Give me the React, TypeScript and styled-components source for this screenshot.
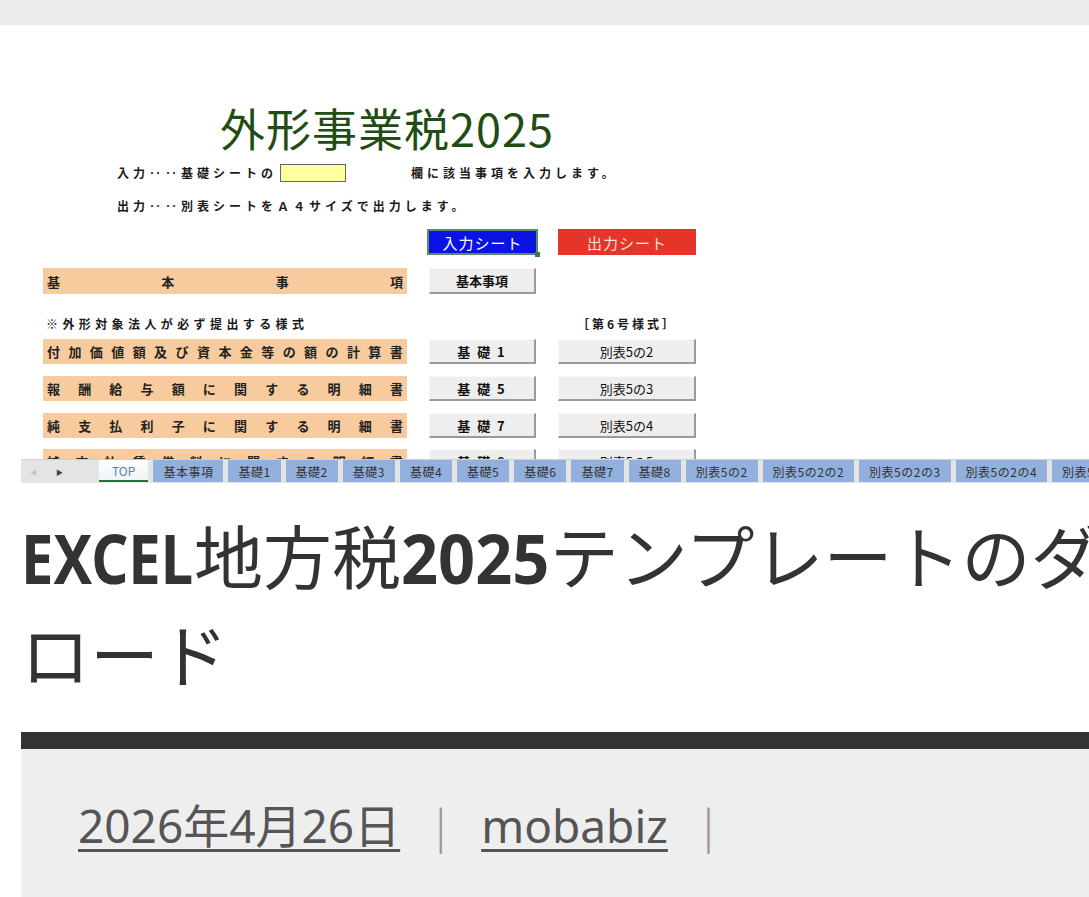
import React from "react";
import styled, { createGlobalStyle } from "styled-components";

const GlobalStyle = createGlobalStyle`
  html, body {
    margin: 0;
    padding: 0;
    overflow: hidden;
    background: #ebebed;
  }
  body {
    font-family: "Noto Sans", "Noto Sans CJK JP", sans-serif;
  }
`;

const JP = `"Noto Sans CJK JP", "Noto Sans", sans-serif`;

const Page = styled.div`
  padding-top: 25px;
  width: 1300px;
`;

const Article = styled.article`
  background: #ffffff;
  padding: 30px 0 0 21px;
`;

const Inner = styled.div`
  width: 1236px;
`;

/* ---------- excel screenshot ---------- */

const Sheet = styled.div`
  display: flex;
  flex-direction: column;
  font-family: ${JP};
  color: #1a1a1a;
`;

const SheetBody = styled.div`
  height: 404px;
  overflow: hidden;
  padding: 45px 0 0 22px;
  box-sizing: border-box;
`;

const SheetTitle = styled.div`
  margin-left: 177px;
  font-size: 45px;
  line-height: 55px;
  color: #1f4d13;
  letter-spacing: 1px;
`;

const Note = styled.div<{ $mt: number }>`
  margin: ${(p) => p.$mt}px 0 0 74px;
  font-size: 12px;
  line-height: 20px;
  font-weight: 700;
  letter-spacing: 4px;
  white-space: nowrap;
  display: flex;
  align-items: center;
`;

const InputCell = styled.span`
  display: inline-block;
  width: 64px;
  height: 16px;
  background: #ffff9e;
  border: 1px solid #666;
  margin: 0 65px 0 3px;
`;

const Row = styled.div<{ $mt: number; $h?: number }>`
  display: grid;
  grid-template-columns: 364px 107px 138px;
  column-gap: 22px;
  margin-top: ${(p) => p.$mt}px;
  height: ${(p) => p.$h ?? 25}px;
  align-items: stretch;
`;

const Label = styled.div`
  background: #f7cb9d;
  display: flex;
  justify-content: space-between;
  align-items: center;
  padding: 0 4px;
  font-size: 13px;
  font-weight: 700;
  color: #222;
`;

const Caption = styled.div<{ $center?: boolean }>`
  font-size: 12px;
  font-weight: 700;
  letter-spacing: ${(p) => (p.$center ? "3px" : "4.4px")};
  display: flex;
  align-items: center;
  padding-left: ${(p) => (p.$center ? "0" : "3px")};
  justify-content: ${(p) => (p.$center ? "center" : "flex-start")};
  white-space: nowrap;
`;

const GrayButton = styled.div<{ $spaced?: boolean; $bold?: boolean }>`
  background: #eeeeee;
  border-right: 2px solid #9a9a9a;
  border-bottom: 2px solid #9a9a9a;
  border-top: 1px solid #f8f8f8;
  border-left: 1px solid #f8f8f8;
  display: flex;
  align-items: center;
  justify-content: center;
  font-size: 13px;
  font-weight: ${(p) => (p.$bold ? 700 : 400)};
  letter-spacing: ${(p) => (p.$spaced ? "2px" : "0")};
  color: #111;
`;

const ColorButton = styled.div<{ $bg: string; $fg: string; $selected?: boolean }>`
  position: relative;
  background: ${(p) => p.$bg};
  color: ${(p) => p.$fg};
  display: flex;
  align-items: center;
  justify-content: center;
  font-size: 15px;
  letter-spacing: 1px;
  box-sizing: border-box;
  border: ${(p) => (p.$selected ? "2px solid #5c8c5c" : "none")};
  margin: ${(p) => (p.$selected ? "0 -2px" : "0")};
`;

const Handle = styled.span`
  position: absolute;
  right: -4px;
  bottom: -4px;
  width: 5px;
  height: 5px;
  background: #2f7d3a;
`;

const TabBar = styled.div`
  height: 24px;
  background: #e4e4e4;
  border-top: 1px solid #cfcfcf;
  box-sizing: border-box;
  display: flex;
  align-items: stretch;
  gap: 5px;
  white-space: nowrap;
  overflow: hidden;
`;

const TabNav = styled.div`
  width: 73px;
  display: flex;
  align-items: center;
  gap: 19px;
  padding-left: 9px;
  box-sizing: border-box;
  font-size: 7px;
`;

const Arrow = styled.span<{ $dim?: boolean }>`
  color: ${(p) => (p.$dim ? "#c4c4c4" : "#444")};
`;

const Tab = styled.div<{ $active?: boolean }>`
  flex: none;
  padding: 0 ${(p) => (p.$active ? "13px" : "10px")};
  display: flex;
  align-items: center;
  font-size: 12px;
  letter-spacing: ${(p) => (p.$active ? "0" : "0.5px")};
  color: ${(p) => (p.$active ? "#5d7fa8" : "#333")};
  background: ${(p) =>
    p.$active ? "linear-gradient(#ffffff, #eef2f6)" : "#92b0dd"};
  border-bottom: ${(p) => (p.$active ? "2px solid #2e6e3e" : "none")};
  margin-bottom: 1px;
`;

/* ---------- post header ---------- */

const PostTitle = styled.h1`
  margin: 24px 0 0;
  font-family: ${JP};
  font-weight: 400;
  font-size: 69px;
  line-height: 95px;
  color: #333;
`;

/* no condensed face is installed, so the bold latin is narrowed by hand */
const Latin = styled.span<{ $scale: number; $em: number }>`
  display: inline-block;
  font-family: "Noto Sans", "Liberation Sans", sans-serif;
  font-weight: 700;
  transform: scaleX(${(p) => p.$scale});
  transform-origin: 0 50%;
  margin-right: ${(p) => -(1 - p.$scale) * p.$em}em;
`;

const Rule = styled.div`
  margin-top: 32px;
  height: 17px;
  background: #333333;
`;

const Meta = styled.div`
  background: #eeeeee;
  padding: 43px 0 0 57px;
  height: 200px;
  font-family: "Noto Sans", "Noto Sans CJK JP", sans-serif;
  font-size: 46px;
  line-height: 66px;
  color: #555;
  display: flex;
  align-items: flex-start;
`;

const MetaLink = styled.a`
  color: #555;
  text-decoration: underline;
  text-decoration-thickness: 3px;
  text-underline-offset: 6px;
`;

const Sep = styled.span`
  color: #999;
  font-weight: 300;
  margin: 0 28px;
`;

const spread = (text: string) =>
  Array.from(text).map((c, i) => <span key={i}>{c}</span>);

const rows = [
  { label: "付加価値額及び資本金等の額の計算書", base: "基 礎 1", form: "別表5の2", mt: 6 },
  { label: "報酬給与額に関する明細書", base: "基 礎 5", form: "別表5の3", mt: 12 },
  { label: "純支払利子に関する明細書", base: "基 礎 7", form: "別表5の4", mt: 12 },
  { label: "純支払賃借料に関する明細書", base: "基 礎 8", form: "別表5の5", mt: 11 },
];

const tabs = [
  "基本事項",
  "基礎1",
  "基礎2",
  "基礎3",
  "基礎4",
  "基礎5",
  "基礎6",
  "基礎7",
  "基礎8",
  "別表5の2",
  "別表5の2の2",
  "別表5の2の3",
  "別表5の2の4",
  "別表5の3",
  "別表5の4",
];

export default function App() {
  return (
    <>
      <GlobalStyle />
      <Page>
        <Article>
          <Inner>
            <Sheet>
              <SheetBody>
                <SheetTitle>外形事業税2025</SheetTitle>
                <Note $mt={8}>
                  入力‥‥基礎シートの
                  <InputCell />
                  欄に該当事項を入力します。
                </Note>
                <Note $mt={13}>出力‥‥別表シートをＡ４サイズで出力します。</Note>
                <Row $mt={13} $h={26}>
                  <div />
                  <ColorButton $bg="#0b12e4" $fg="#ffffff" $selected>
                    入力シート
                    <Handle />
                  </ColorButton>
                  <ColorButton $bg="#e5352b" $fg="#f9e2dc">
                    出力シート
                  </ColorButton>
                </Row>
                <Row $mt={13} $h={26}>
                  <Label>{spread("基本事項")}</Label>
                  <GrayButton $bold>基本事項</GrayButton>
                </Row>
                <Row $mt={19} $h={20}>
                  <Caption>※外形対象法人が必ず提出する様式</Caption>
                  <div />
                  <Caption $center>［第6号様式］</Caption>
                </Row>
                {rows.map((r) => (
                  <Row key={r.form} $mt={r.mt}>
                    <Label>{spread(r.label)}</Label>
                    <GrayButton $spaced $bold>
                      {r.base}
                    </GrayButton>
                    <GrayButton>{r.form}</GrayButton>
                  </Row>
                ))}
              </SheetBody>
              <TabBar>
                <TabNav>
                  <Arrow $dim>◀</Arrow>
                  <Arrow>▶</Arrow>
                </TabNav>
                <Tab $active>TOP</Tab>
                {tabs.map((t) => (
                  <Tab key={t}>{t}</Tab>
                ))}
              </TabBar>
            </Sheet>

            <PostTitle>
              <Latin $scale={0.84} $em={2.9}>
                EXCEL
              </Latin>
              地方税
              <Latin $scale={0.94} $em={2.22}>
                2025
              </Latin>
              テンプレートのダウンロード
            </PostTitle>

            <Rule />
            <Meta>
              <MetaLink href="#">2026年4月26日</MetaLink>
              <Sep>|</Sep>
              <MetaLink href="#">mobabiz</MetaLink>
              <Sep>|</Sep>
            </Meta>
          </Inner>
        </Article>
      </Page>
    </>
  );
}
